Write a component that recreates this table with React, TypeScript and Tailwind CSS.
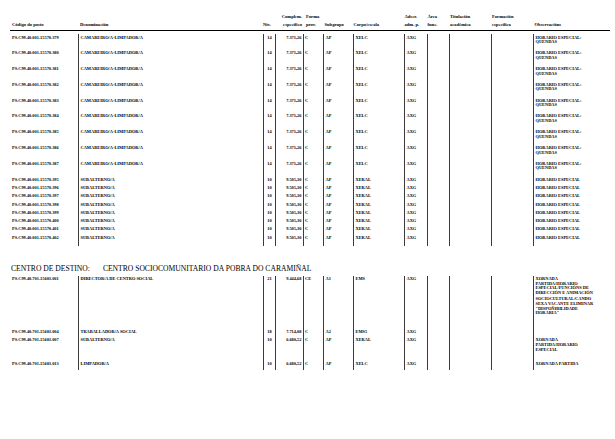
import React from "react";

// Column template shared by header and data rows
const COLS =
  "grid grid-cols-[68px_185px_12px_28px_20px_30px_51px_23px_22px_42px_42px_77px]";

interface Row {
  code: string;
  denom: string;
  niv: string;
  comp: string;
  forma: string;
  sub: string;
  corpo: string;
  obs: string[];
  gapAfter?: number;
}

const QUENDAS = ["HORARIO ESPECIAL:", "QUENDAS"];

const camareiros: Row[] = ["379", "380", "381", "382", "383", "384", "385", "386", "387"].map((n) => ({
  code: `PS.C99.40.001.15570.${n}`,
  denom: "CAMAREIRO/A-LIMPADOR/A",
  niv: "14",
  comp: "7.371,26",
  forma: "C",
  sub: "AP",
  corpo: "XELC",
  obs: QUENDAS,
}));

const subalternos: Row[] = ["395", "396", "397", "398", "399", "400", "401", "402"].map((n) => ({
  code: `PS.C99.40.001.15570.${n}`,
  denom: "SUBALTERNO/A",
  niv: "10",
  comp: "9.505,30",
  forma: "C",
  sub: "AP",
  corpo: "XERAL",
  obs: ["HORARIO ESPECIAL"],
}));

const pobra: { row: Row; h: string }[] = [
  {
    row: {
      code: "PS.C99.40.701.15603.001",
      denom: "DIRECTOR/A DE CENTRO SOCIAL",
      niv: "21",
      comp: "9.444,68",
      forma: "CE",
      sub: "A1",
      corpo: "EMS",
      obs: [
        "XORNADA",
        "PARTIDA/HORARIO",
        "ESPECIAL/FUNCIÓNS DE",
        "DIRECCIÓN E ANIMACIÓN",
        "SOCIOCULTURAL/CANDO",
        "SEXA VACANTE ELIMINAR",
        "\"DISPOÑIBILIDADE",
        "HORARIA\"",
      ],
      gapAfter: 3,
    },
    h: "h-[53px]",
  },
  {
    row: {
      code: "PS.C99.40.701.15603.004",
      denom: "TRABALLADOR/A SOCIAL",
      niv: "18",
      comp: "7.714,08",
      forma: "C",
      sub: "A2",
      corpo: "EMS5",
      obs: [],
    },
    h: "h-[8.3px]",
  },
  {
    row: {
      code: "PS.C99.40.701.15603.007",
      denom: "SUBALTERNO/A",
      niv: "10",
      comp: "6.680,52",
      forma: "C",
      sub: "AP",
      corpo: "XERAL",
      obs: ["XORNADA", "PARTIDA/HORARIO", "ESPECIAL"],
    },
    h: "h-[24px]",
  },
  {
    row: {
      code: "PS.C99.40.701.15603.013",
      denom: "LIMPADOR/A",
      niv: "10",
      comp: "6.680,52",
      forma: "C",
      sub: "AP",
      corpo: "XELC",
      obs: ["XORNADA PARTIDA"],
    },
    h: "h-[9px]",
  },
];

const cell = "border-l border-[#3a3a3a] pt-[1.5px]";

const DataRow: React.FC<{ row: Row; h: string }> = ({ row, h }) => (
  <div className={`${COLS} ${h}`}>
    <div className="pl-[2px] pt-[1.5px] whitespace-nowrap">{row.code}</div>
    <div className={`${cell} pl-[1.5px] whitespace-nowrap`}>{row.denom}</div>
    <div className={`${cell} text-center`}>{row.niv}</div>
    <div className={`${cell} text-right pr-[1.5px]`}>{row.comp}</div>
    <div className={`${cell} pl-[1px]`}>{row.forma}</div>
    <div className={`${cell} pl-[1.5px]`}>{row.sub}</div>
    <div className={`${cell} pl-[1.5px]`}>{row.corpo}</div>
    <div className={`${cell} pl-[1.5px]`}>AXG</div>
    <div className={cell} />
    <div className={cell} />
    <div className={cell} />
    <div className={`${cell} pl-[1.5px] whitespace-nowrap`}>
      {row.obs.map((line, i) => (
        <div key={i} className={row.gapAfter && i === row.gapAfter ? "mb-[2px]" : ""}>
          {line}
        </div>
      ))}
    </div>
  </div>
);

const HeadCell: React.FC<{ lines: string[]; className?: string }> = ({ lines, className = "" }) => (
  <div className={`flex flex-col justify-end whitespace-nowrap ${className}`}>
    {lines.map((l) => (
      <div key={l}>{l}</div>
    ))}
  </div>
);

export default function App() {
  return (
    <div className="w-[615px] h-[439px] bg-white text-black font-['Liberation_Serif',serif] font-bold text-[4.4px] leading-[4.6px] overflow-hidden">
      <div className="ml-[10px] w-[600px] pt-[13px]">
        {/* Column headings */}
        <div className={`${COLS} leading-[7.5px] text-[4.6px] pb-[1.5px]`}>
          <HeadCell lines={["Código do posto"]} className="pl-[2px]" />
          <HeadCell lines={["Denominación"]} className="pl-[2px]" />
          <HeadCell lines={["Nív."]} />
          <HeadCell lines={["Complem.", "específico"]} className="items-end pr-[1px]" />
          <HeadCell lines={["Forma", "prov."]} className="pl-[3px]" />
          <HeadCell lines={["Subgrupo"]} className="pl-[1.5px]" />
          <HeadCell lines={["Corpo/escala"]} className="pl-[0.5px]" />
          <HeadCell lines={["Adscr.", "adm. p."]} className="pl-[0.5px]" />
          <HeadCell lines={["Área", "func."]} className="pl-[0.5px]" />
          <HeadCell lines={["Titulación", "académica"]} className="pl-[1px]" />
          <HeadCell lines={["Formación", "específica"]} className="pl-[1px]" />
          <HeadCell lines={["Observacións"]} className="pl-[1.5px]" />
        </div>
        <div className="h-px bg-black" />

        {/* First centre */}
        <div className="mt-[3.5px]">
          {camareiros.map((r) => (
            <DataRow key={r.code} row={r} h="h-[15.8px]" />
          ))}
          {subalternos.map((r) => (
            <DataRow key={r.code} row={r} h="h-[8.3px]" />
          ))}
          <div className={`${COLS} h-[3px]`}>
            <div />
            {Array.from({ length: 11 }).map((_, i) => (
              <div key={i} className="border-l border-[#3a3a3a]" />
            ))}
          </div>
        </div>

        {/* Second centre */}
        <div className="mt-[19px] flex gap-[13px] pl-[1px] font-normal text-[7.6px] leading-[8px]">
          <span>CENTRO DE DESTINO:</span>
          <span>CENTRO SOCIOCOMUNITARIO DA POBRA DO CARAMIÑAL</span>
        </div>
        <div className="mt-[3px]">
          {pobra.map((p) => (
            <DataRow key={p.row.code} row={p.row} h={p.h} />
          ))}
        </div>
      </div>
    </div>
  );
}
